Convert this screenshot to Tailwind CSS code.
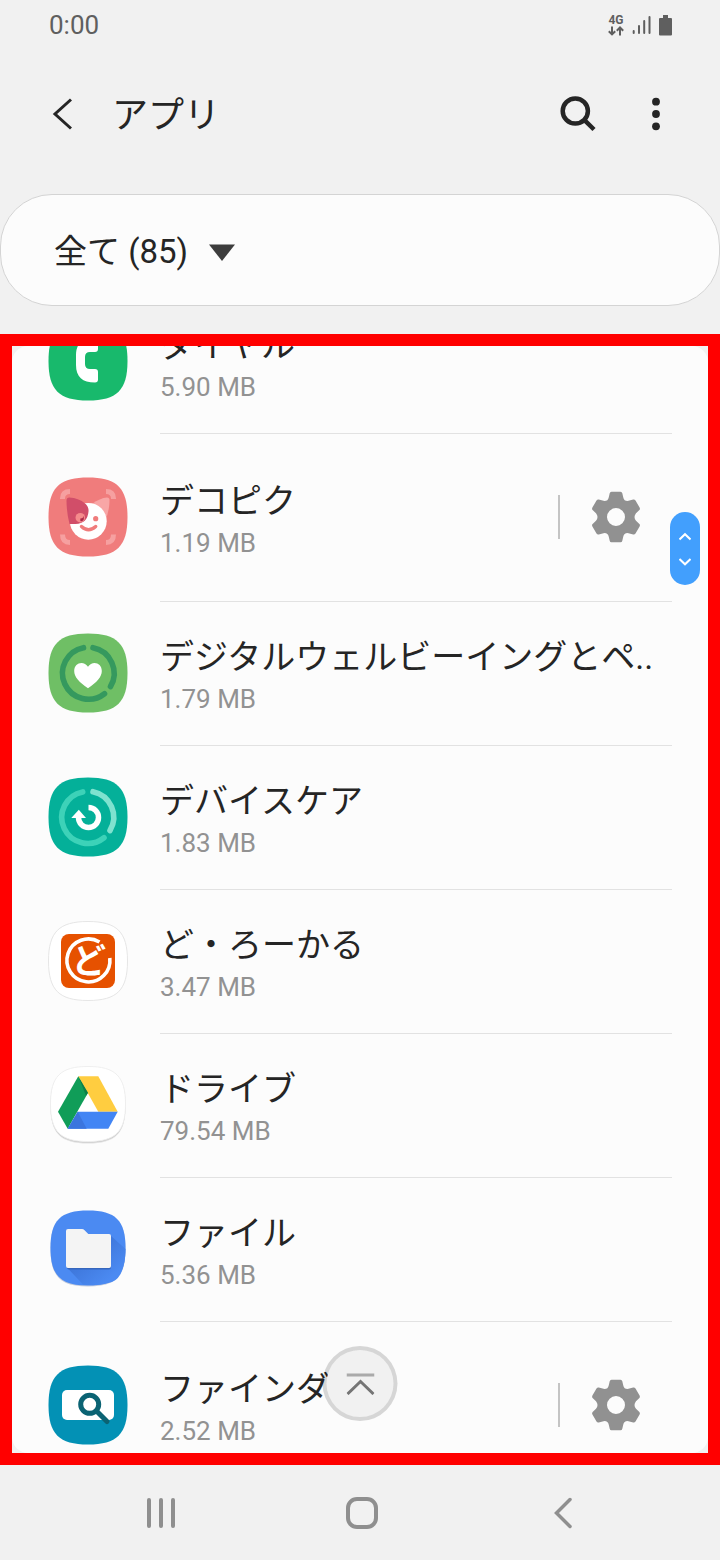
<!DOCTYPE html>
<html lang="ja">
<head>
  <meta charset="UTF-8" />
  <meta name="viewport" content="width=device-width, initial-scale=1.0"/>
  <title>アプリ</title>
  <script src="https://cdn.jsdelivr.net/npm/@tailwindcss/browser@4"></script>
</head>
<body class="bg-[#f1f1f1] text-[#252525] font-[Roboto,'Noto_Sans_CJK_JP',sans-serif]">

  <!-- Shared shapes -->
  <svg class="hidden" aria-hidden="true">
    <symbol id="squircle" viewBox="0 0 80 80">
      <path d="M40 0.5C69 0.5 79.500 11 79.500 40S69 79.500 40 79.500 0.500 69 0.500 40 11 0.500 40 0.500Z"/>
    </symbol>
    <symbol id="gear" viewBox="0 0 50 52">
      <path fill-rule="evenodd" d="M20.500 .7H29.500Q31 .7 31.300 2.200L32.300 6.500Q33 10 36.500 10L42.200 8.600Q43.700 8.300 44.500 9.600L48.600 16.500Q49.400 18 48.400 19L45 22.200Q42 26 45 29.800L48.400 33Q49.400 34 48.600 35.500L44.500 42.400Q43.700 43.700 42.200 43.400L36.500 42Q33 42 32.300 45.500L31.300 49.800Q31 51.300 29.500 51.300H20.500Q19 51.300 18.700 49.800L17.700 45.500Q17 42 13.500 42L7.800 43.400Q6.300 43.700 5.500 42.400L1.400 35.500Q.6 34 1.600 33L5 29.800Q8 26 5 22.200L1.600 19Q.6 18 1.400 16.500L5.500 9.600Q6.300 8.300 7.800 8.600L13.500 10Q17 10 17.700 6.500L18.700 2.200Q19 .7 20.500 .7zM25 17a9 9 0 1 0 0 18a9 9 0 1 0 0-18z"/>
    </symbol>
  </svg>

  <div class="flex h-screen flex-col">
    <!-- Status bar -->
    <div class="flex h-[50px] shrink-0 items-center justify-between pr-12 pl-[49px] text-[#5f5f5f]">
      <span class="text-[26px] leading-8">0:00</span>
      <div class="flex items-center gap-2">
        <div class="flex flex-col items-center">
          <span class="text-xs leading-3 font-bold">4G</span>
          <svg class="h-[10px] w-4" viewBox="0 0 16 10" fill="none" stroke="currentColor" stroke-width="2">
            <path d="M4 .5v8M.8 5.200L4 8.400l3.200-3.200M12 9.500v-8M8.800 4.700L12 1.500l3.200 3.200"/>
          </svg>
        </div>
        <svg class="h-5 w-[19px]" viewBox="0 0 19 20" fill="none" stroke="currentColor" stroke-width="2" stroke-linecap="round">
          <path d="M1.700 16v2M7 11v7M12.200 6v12M17.500 2v16"/>
        </svg>
        <svg class="h-[21px] w-[13px]" viewBox="0 0 13 21" fill="currentColor">
          <path d="M4 0h5v3h3q1 0 1 1v15.500q0 1-1 1H1q-1 0-1-1V4q0-1 1-1h3z"/>
        </svg>
      </div>
    </div>

    <!-- Title bar -->
    <header class="flex h-32 shrink-0 items-center pr-[58px] pl-[52px]">
      <button aria-label="戻る">
        <svg class="h-8 w-5" viewBox="0 0 20 32" fill="none" stroke="currentColor" stroke-width="3">
          <path d="M19 1.500L3 16l16 14.500"/>
        </svg>
      </button>
      <h1 class="ml-10 flex-1 pt-1 text-[36px] leading-12">アプリ</h1>
      <button aria-label="検索">
        <svg class="h-9 w-9" viewBox="0 0 36 36" fill="none" stroke="currentColor" stroke-width="4.500">
          <circle cx="15.300" cy="15" r="12.600"/>
          <path d="M24 23.700L34 33.500"/>
        </svg>
      </button>
      <button aria-label="その他" class="ml-[54px]">
        <svg class="h-9 w-3" viewBox="0 0 12 36" fill="currentColor">
          <circle cx="6" cy="5.700" r="3.900"/>
          <circle cx="6" cy="18" r="3.900"/>
          <circle cx="6" cy="30.300" r="3.900"/>
        </svg>
      </button>
    </header>

    <!-- Filter -->
    <div class="mt-4 flex h-28 shrink-0 items-center gap-5 rounded-[52px] border border-[#d4d4d4] bg-[#fcfcfc] pt-1 pl-[53px]">
      <select aria-label="表示するアプリ" class="appearance-none bg-transparent text-[33px] leading-12">
        <option>全て (85)</option>
      </select>
      <svg class="h-[17px] w-[26px]" viewBox="0 0 26 17" fill="#3d3d3d"><path d="M0 .5h26L13 17z"/></svg>
    </div>

    <!-- App list -->
    <main class="relative mt-7 min-h-0 flex-1 overflow-hidden border-12 border-[#ff0000]">
      <div class="h-full overflow-hidden rounded-2xl bg-[#fcfcfc]">
        <ul class="-mt-14">
          <li class="flex h-36 items-center gap-8 px-9">
            <svg class="mb-0.5 h-20 w-20 shrink-0" viewBox="0 0 80 80">
              <use href="#squircle" fill="#18b96c"/>
              <path fill="#fff" d="M50 20v8q0 3-3 3h-5q-5 0-5 5v7q0 5 5 5h5q3 0 3 3v7.500q0 3-3 3C34.500 61.500 28 56 28 44V34C28 23 34 17 47 17q3 0 3 3z"/>
            </svg>
            <a href="#" class="flex h-full min-w-0 flex-1 flex-col justify-center border-b border-[#e2e2e2]">
              <span class="truncate text-[34px] leading-[50px]">ダイヤル</span>
              <span class="text-[26px] leading-[34px] text-[#929292]">5.90 MB</span>
            </a>
          </li>

          <li class="flex h-42 items-center gap-8 px-9">
            <svg class="mb-0.5 h-20 w-20 shrink-0" viewBox="0 0 80 80">
              <use href="#squircle" fill="#f07c7c"/>
              <path fill="none" stroke="#f6a0a0" stroke-width="5" d="M14.500 22V21.500q0-7 7.500-7M58 14.500q7.500 0 7.500 7V22M14.500 57.500q0 8 7.500 8M58 65.500q7.500 0 7.500-8"/>
              <path fill="#f8a6a6" d="M44 27q8-6 15-6.500 2.500 0 2.500 2.500 0 12-5 22z"/>
              <circle cx="40.300" cy="44.300" r="18.400" fill="#fff"/>
              <path fill="#d14e69" d="M18.500 23.500q0-3 3-3 9 .5 15 5.500 4.500 3.500 4 8.500-1 12-13 12.500h-6Q18.500 35 18.500 23.500z"/>
              <circle cx="32.300" cy="40.700" r="4.800" fill="#f58b8c"/>
              <path fill="#a92747" d="M32.300 41.500q3 .3 3-2.500 1.500 4-1 5t-2-2.500z"/>
              <circle cx="47.700" cy="41.700" r="2.600" fill="#f07c7c"/>
              <path fill="none" stroke="#f07c7c" stroke-width="3.400" stroke-linecap="round" d="M33.500 49.500q7 6.500 14.200 0"/>
            </svg>
            <div class="flex h-full min-w-0 flex-1 items-center border-b border-[#e2e2e2]">
              <a href="#" class="flex min-w-0 flex-1 flex-col">
                <span class="truncate text-[34px] leading-[50px]">デコピク</span>
                <span class="text-[26px] leading-[34px] text-[#929292]">1.19 MB</span>
              </a>
              <button aria-label="デコピクの設定" class="mb-0.5 flex h-11 w-[114px] items-center justify-center border-l-2 border-[#c4c4c4]">
                <svg class="h-[52px] w-[50px]" fill="#919191"><use href="#gear"/></svg>
              </button>
            </div>
          </li>

          <li class="flex h-36 items-center gap-8 px-9">
            <svg class="mb-0.5 h-20 w-20 shrink-0" viewBox="0 0 80 80">
              <use href="#squircle" fill="#6fbf65"/>
              <g fill="none" stroke="#35995e" stroke-width="5.600" stroke-linecap="round">
                <path d="M35.500 14.700A26 26 0 1 0 56.500 60.700"/>
                <path d="M45 14.700A26 26 0 0 1 62.500 53.500"/>
              </g>
              <path fill="#fff" d="M40 55.300C31 49 26.200 44 26.200 38c0-9 10-10.500 13.800-4.200C43.800 27.500 53.800 29 53.800 38c0 6-4.800 11-13.800 17.300z"/>
            </svg>
            <a href="#" class="flex h-full min-w-0 flex-1 flex-col justify-center border-b border-[#e2e2e2]">
              <span class="truncate text-[34px] leading-[50px]">デジタルウェルビーイングとペ..</span>
              <span class="text-[26px] leading-[34px] text-[#929292]">1.79 MB</span>
            </a>
          </li>

          <li class="flex h-36 items-center gap-8 px-9">
            <svg class="mb-0.5 h-20 w-20 shrink-0" viewBox="0 0 80 80">
              <use href="#squircle" fill="#04b099"/>
              <g fill="none" stroke-width="5.600" stroke-linecap="round">
                <path stroke="#3dd2b8" d="M34.700 14.900A26 26 0 1 0 56 60.700"/>
                <path stroke="#7fe2cf" d="M45 14.700A26 26 0 0 1 62 53.500"/>
              </g>
              <path fill="none" stroke="#fff" stroke-width="5.500" d="M40.500 30.500A10 10 0 1 1 30.500 40.500"/>
              <path fill="#fff" d="M23.300 41l7.500-8.300L38 41z"/>
            </svg>
            <a href="#" class="flex h-full min-w-0 flex-1 flex-col justify-center border-b border-[#e2e2e2]">
              <span class="truncate text-[34px] leading-[50px]">デバイスケア</span>
              <span class="text-[26px] leading-[34px] text-[#929292]">1.83 MB</span>
            </a>
          </li>

          <li class="flex h-36 items-center gap-8 px-9">
            <svg class="mb-0.5 h-20 w-20 shrink-0" viewBox="0 0 80 80">
              <use href="#squircle" fill="#fff" stroke="#e6e6e6"/>
              <rect x="13" y="13" width="54" height="54" rx="8" fill="#e65100"/>
              <path fill="none" stroke="#fff" stroke-width="3.600" d="M51.500 21A21.500 21.500 0 1 0 61.800 37"/>
              <text x="24" y="52" font-size="34" font-weight="700" fill="#fff">ど</text>
            </svg>
            <a href="#" class="flex h-full min-w-0 flex-1 flex-col justify-center border-b border-[#e2e2e2]">
              <span class="truncate text-[34px] leading-[50px]">ど・ろーかる</span>
              <span class="text-[26px] leading-[34px] text-[#929292]">3.47 MB</span>
            </a>
          </li>

          <li class="flex h-36 items-center gap-8 px-9">
            <svg class="mb-0.5 h-20 w-20 shrink-0" viewBox="0 0 80 80">
              <use href="#squircle" x="2" y="3" width="76" height="76" fill="#e2e2e2"/>
              <use href="#squircle" x="2" y="2" width="76" height="76" fill="#c6c6c6"/>
              <use href="#squircle" x="2" y="1" width="76" height="76" fill="#fff" stroke="#eee"/>
              <path fill="#109d58" d="M30.300 11.300L40 27.700 19.700 63.700 10 46.700z"/>
              <path fill="#ffcd40" d="M30.300 11.300h20l19.400 35.400H50.300z"/>
              <path fill="#4285f4" d="M29.700 46.700h40l-9.400 17H19.700z"/>
              <path fill="#3b75de" d="M29.700 46.700l9 17h-19z"/>
              <path fill="#0d8048" d="M30.300 11.300L40 27.700l-2 3z"/>
            </svg>
            <a href="#" class="flex h-full min-w-0 flex-1 flex-col justify-center border-b border-[#e2e2e2]">
              <span class="truncate text-[34px] leading-[50px]">ドライブ</span>
              <span class="text-[26px] leading-[34px] text-[#929292]">79.54 MB</span>
            </a>
          </li>

          <li class="flex h-36 items-center gap-8 px-9">
            <svg class="mb-0.5 h-20 w-20 shrink-0" viewBox="0 0 80 80">
              <defs>
                <linearGradient id="folderShade" x1="0" y1="0" x2="1" y2="1">
                  <stop offset="0.400" stop-color="#3f78dc"/>
                  <stop offset="0.800" stop-color="#4b8af2"/>
                </linearGradient>
              </defs>
              <use href="#squircle" x="2" y="2" width="76" height="76" fill="#c3cbdc"/>
              <use href="#squircle" x="2" y="1" width="76" height="76" fill="#4b8af2"/>
              <path fill="url(#folderShade)" d="M62 26l15.500 14Q77 68 64 73q-14 5-29 2.500L18.500 58z"/>
              <path fill="#3566bd" d="M19 58.500h42.500q1.500 0 1.500-2v2q0 2-2 2H21q-2 0-2-2z"/>
              <path fill="#f4f4f4" d="M20 20h14q1.500 0 2.300 1l4 4H61q2 0 2 2v30q0 2-2 2H20q-2 0-2-2V22q0-2 2-2z"/>
            </svg>
            <a href="#" class="flex h-full min-w-0 flex-1 flex-col justify-center border-b border-[#e2e2e2]">
              <span class="truncate text-[34px] leading-[50px]">ファイル</span>
              <span class="text-[26px] leading-[34px] text-[#929292]">5.36 MB</span>
            </a>
          </li>

          <li class="flex h-42 items-center gap-8 px-9">
            <svg class="mb-0.5 h-20 w-20 shrink-0" viewBox="0 0 80 80">
              <use href="#squircle" fill="#0391b5"/>
              <rect x="14" y="25" width="52" height="30" rx="5" fill="#fff"/>
              <g fill="none" stroke="#0b6373" stroke-width="5">
                <circle cx="41.700" cy="39.300" r="9"/>
                <path stroke-linecap="round" d="M49 46.500l10 10"/>
              </g>
            </svg>
            <div class="flex h-full min-w-0 flex-1 items-center border-b border-[#e2e2e2]">
              <a href="#" class="flex min-w-0 flex-1 flex-col">
                <span class="truncate text-[34px] leading-[50px]">ファインダー</span>
                <span class="text-[26px] leading-[34px] text-[#929292]">2.52 MB</span>
              </a>
              <button aria-label="ファインダーの設定" class="mb-0.5 flex h-11 w-[114px] items-center justify-center border-l-2 border-[#c4c4c4]">
                <svg class="h-[52px] w-[50px]" fill="#919191"><use href="#gear"/></svg>
              </button>
            </div>
          </li>
        </ul>
      </div>

      <!-- Fast scroll handle -->
      <button aria-label="スクロール" class="absolute top-[166px] right-2 flex h-[73px] w-[30px] items-center justify-center rounded-full bg-[#429ffd]">
        <svg class="h-9 w-3" viewBox="0 0 12 36" fill="none" stroke="#fff" stroke-width="2">
          <path d="M.5 8.500L6 3.200l5.500 5.300M.5 28L6 33.300 11.500 28"/>
        </svg>
      </button>

      <!-- Go to top -->
      <button aria-label="先頭へ" class="absolute bottom-8 left-1/2 flex size-[75px] -translate-x-1/2 items-center justify-center rounded-full border-4 border-black/15 bg-[#f1f1f1] bg-clip-padding">
        <svg class="h-[22px] w-7" viewBox="0 0 28 22" fill="none" stroke-width="3">
          <path stroke="#aaa" d="M0 2h28"/>
          <path stroke="#757575" d="M1 21L14 8.500 27 21"/>
        </svg>
      </button>
    </main>

    <!-- Navigation bar -->
    <nav class="grid h-[95px] shrink-0 grid-cols-3 items-center justify-items-center pr-14 pl-15 text-[#8f8f8f]">
      <button aria-label="履歴">
        <svg class="h-8 w-8" viewBox="0 0 32 32" fill="none" stroke="currentColor" stroke-width="4" stroke-linecap="round">
          <path d="M4 3v26M16 3v26M28 3v26"/>
        </svg>
      </button>
      <button aria-label="ホーム">
        <svg class="h-8 w-8" viewBox="0 0 32 32" fill="none" stroke="currentColor" stroke-width="4">
          <rect x="2" y="2" width="28" height="28" rx="9"/>
        </svg>
      </button>
      <button aria-label="戻る">
        <svg class="h-8 w-5" viewBox="0 0 20 32" fill="none" stroke="currentColor" stroke-width="3.500" stroke-linecap="round">
          <path d="M17 2.500L3.500 16 17 29.500"/>
        </svg>
      </button>
    </nav>
  </div>
</body>
</html>
